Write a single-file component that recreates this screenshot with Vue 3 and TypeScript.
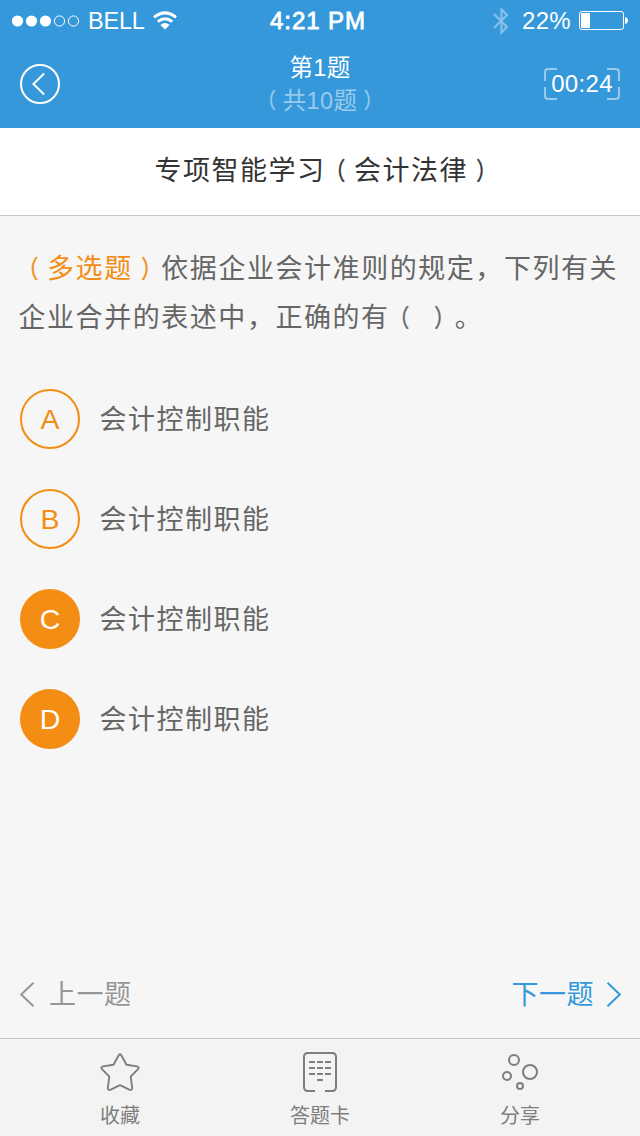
<script setup lang="ts">
interface Option {
  key: string
  text: string
  selected: boolean
}

const options: Option[] = [
  { key: 'A', text: '会计控制职能', selected: false },
  { key: 'B', text: '会计控制职能', selected: false },
  { key: 'C', text: '会计控制职能', selected: true },
  { key: 'D', text: '会计控制职能', selected: true },
]
</script>

<template>
  <div class="screen">
    <header class="top">
      <div class="status">
        <div class="carrier">
          <svg class="dots" width="70" height="14" viewBox="0 0 70 14">
            <g fill="#fff">
              <circle cx="6.5" cy="6" r="5.6" /><circle cx="20.5" cy="6" r="5.6" /><circle cx="34.5" cy="6" r="5.6" />
            </g>
            <g fill="none" stroke="#fff">
              <circle cx="48.5" cy="6" r="5.1" /><circle cx="62.5" cy="6" r="5.1" />
            </g>
          </svg>
          <span class="bell">BELL</span>
          <svg class="wifi" width="24" height="19" viewBox="0 0 24 19">
            <g fill="none" stroke="#fff" stroke-width="3">
              <path d="M1 6.3Q12 -2.6 23 6.3" />
              <path d="M4.8 10.6Q12 4.8 19.2 10.6" />
            </g>
            <path d="M7.4 14Q12 10.2 16.6 14L12 18.6Z" fill="#fff" />
          </svg>
        </div>
        <span class="clock">4:21 PM</span>
        <div class="power">
          <svg class="bt" width="16" height="28" viewBox="0 0 16 28">
            <path d="M1 7L14 20L8.5 25.5V2.5L14 8L1 21" fill="none" stroke="#85c1ea" stroke-width="2.2" />
          </svg>
          <span class="percent">22%</span>
          <svg class="battery" width="50" height="20" viewBox="0 0 50 20">
            <rect x=".5" y=".5" width="44" height="18" rx="2.5" fill="none" stroke="#fff" />
            <rect x="2" y="2" width="9" height="15" rx="1" fill="#fff" />
            <path d="M46 6Q49 7 49 9.5T46 13Z" fill="#fff" />
          </svg>
        </div>
      </div>
      <div class="nav">
        <svg class="back" width="40" height="40" viewBox="0 0 40 40" fill="none" stroke="#fff">
          <circle cx="20" cy="20" r="19" stroke-width="2" />
          <path d="M24.2 9.5L13.4 20L24.2 30.5" stroke-width="1.9" />
        </svg>
        <div class="heading">
          <div class="current">第1题</div>
          <div class="total"><span class="open">（</span>共10题<span class="close">）</span></div>
        </div>
        <div class="timer">
          <svg class="frame" width="76" height="32" viewBox="0 0 76 32" fill="none" stroke="#99cbed" stroke-width="2">
            <path d="M13 1H4Q1 1 1 4V13M63 1H72Q75 1 75 4V13M1 19V28Q1 31 4 31H13M75 19V28Q75 31 72 31H63" />
          </svg>
          <span class="time">00:24</span>
        </div>
      </div>
    </header>

    <h1 class="title">专项智能学习<span class="open">（</span>会计法律<span class="close">）</span></h1>

    <main class="content">
      <p class="question">
        <span class="kind"><span class="open">（</span>多选题<span class="close">）</span></span>依据企业会计准则的规定，下列有关<br>企业合并的表述中，正确的有<span class="open">（</span><span class="blank"></span><span class="close">）</span>。
      </p>
      <ul class="options">
        <li v-for="option in options" :key="option.key" class="option">
          <span class="badge" :class="{ selected: option.selected }">{{ option.key }}</span>
          <span class="label">{{ option.text }}</span>
        </li>
      </ul>
    </main>

    <nav class="pager">
      <div class="page prev">
        <svg width="15" height="26" viewBox="0 0 15 26"><path d="M13.5 1.7L1.2 13.5L13.5 25.3" fill="none" stroke="currentColor" stroke-width="1.9" /></svg>
        <span>上一题</span>
      </div>
      <div class="page next">
        <span>下一题</span>
        <svg width="15" height="26" viewBox="0 0 15 26"><path d="M1.5 1.7L13.8 13.5L1.5 25.3" fill="none" stroke="currentColor" stroke-width="1.9" /></svg>
      </div>
    </nav>

    <footer class="tabs">
      <div class="tab">
        <svg width="40" height="42" viewBox="0 0 40 42" fill="none" stroke="#7e7e7e" stroke-width="1.9" stroke-linejoin="round">
          <path d="M18.7 3.2Q20 1.2 21.3 3.2L26.5 12.8L37 14.4Q39.6 15.2 38 17.2L30.7 24.6L32.2 36Q32 38.4 29.8 37.8L20 33.2L10.2 37.8Q8 38.4 7.8 36L9.3 24.6L2 17.2Q.4 15.2 3 14.4L13.5 12.8Z" />
        </svg>
        <span>收藏</span>
      </div>
      <div class="tab">
        <svg width="40" height="42" viewBox="0 0 40 42" fill="none" stroke="#7e7e7e" stroke-width="2">
          <path d="M15 39H8Q4 39 4 35V5Q4 1 8 1H32Q36 1 36 5V35Q36 39 32 39H25" />
          <path d="M9 10H15M17 10H23M25 10H31M9 16H15M17 16H23M25 16H31M9 22H15M17 22H23M25 22H31M17 28H23" />
        </svg>
        <span>答题卡</span>
      </div>
      <div class="tab">
        <svg width="40" height="42" viewBox="0 0 40 42" fill="none" stroke="#7e7e7e" stroke-width="2">
          <circle cx="14" cy="8" r="5" /><circle cx="30" cy="20" r="7" /><circle cx="7" cy="24" r="4" /><circle cx="20" cy="34" r="3" />
        </svg>
        <span>分享</span>
      </div>
    </footer>
  </div>
</template>

<style>
body {
  margin: 0;
}
</style>

<style scoped>
.screen {
  display: flex;
  flex-direction: column;
  width: 640px;
  height: 1136px;
  overflow: hidden;
  background: #f6f6f6;
  color: #666;
  font-family: "Liberation Sans", "Noto Sans CJK SC", sans-serif;
  white-space: nowrap;
}
.top {
  height: 128px;
  background: #3498db;
  color: #fff;
}
.status {
  display: grid;
  grid-template-columns: 1fr auto 1fr;
  height: 40px;
  line-height: 42px;
  font-size: 24px;
}
.carrier,
.power {
  display: flex;
  align-items: center;
}
.dots {
  margin: 1px 7px 0 11px;
}
.bell {
  font-size: 23.5px;
  letter-spacing: -0.2px;
}
.wifi {
  margin: 0 0 2px 8.5px;
}
.clock {
  margin-right: 4px;
  letter-spacing: 0.95px;
  -webkit-text-stroke: 0.8px #fff;
}
.power {
  justify-content: flex-end;
  padding-right: 11px;
}
.bt {
  margin-right: 13.5px;
}
.percent {
  letter-spacing: 0.3px;
  margin-right: 8px;
}
.nav {
  display: grid;
  grid-template-columns: 1fr auto 1fr;
  height: 88px;
}
.back {
  margin: 24px 0 0 20px;
}
.heading {
  display: flex;
  flex-direction: column;
  align-items: center;
  padding-top: 12px;
  font-size: 23.5px;
}
.current {
  height: 33px;
  line-height: 33px;
  letter-spacing: 0.3px;
}
.total {
  height: 33px;
  line-height: 33px;
  color: #99cbed;
  letter-spacing: 0.4px;
}
.timer {
  display: grid;
  justify-self: end;
  align-self: start;
  width: 76px;
  height: 32px;
  margin: 28px 20px 0 0;
  place-items: center;
}
.frame,
.time {
  grid-area: 1 / 1;
}
.time {
  font-size: 24px;
  line-height: 32px;
  letter-spacing: 0.3px;
}
.open,
.close {
  display: inline-block;
  -webkit-text-stroke: 0.5px currentColor;
}
.open {
  transform: translateX(-0.17em) scale(0.75, 0.9);
}
.close {
  transform: translateX(0.17em) scale(0.75, 0.9);
}
.title {
  height: 87px;
  margin: 0;
  padding-left: 154.5px;
  border-bottom: 1px solid #c8c8c8;
  background: #fff;
  color: #333;
  font-size: 27px;
  font-weight: 400;
  line-height: 87px;
  letter-spacing: 1.5px;
}
.content {
  flex: 1;
  padding: 29px 0 0 18.5px;
}
.question {
  margin: 0;
  font-size: 27px;
  line-height: 49px;
  letter-spacing: 1.55px;
}
.kind {
  color: #f48d13;
}
.blank {
  display: inline-block;
  width: 8px;
}
.options {
  display: grid;
  gap: 40px;
  margin: 46px 0 0 1.5px;
  padding: 0;
  list-style: none;
}
.option {
  display: flex;
  align-items: center;
  gap: 19.5px;
  height: 60px;
}
.badge {
  box-sizing: border-box;
  width: 60px;
  height: 60px;
  border: 2px solid #f48d13;
  border-radius: 50%;
  color: #f48d13;
  font-size: 28.5px;
  line-height: 56px;
  text-align: center;
}
.badge.selected {
  background: #f48d13;
  color: #fff;
}
.label {
  padding-top: 2px;
  font-size: 27px;
  line-height: 56px;
  letter-spacing: 1.5px;
}
.pager {
  display: flex;
  justify-content: space-between;
  height: 88px;
  padding: 0 19.5px;
  font-size: 27px;
  letter-spacing: 0.5px;
}
.page {
  display: flex;
  align-items: center;
  gap: 14.5px;
}
.page span {
  padding-bottom: 4px;
}
.prev {
  color: #969696;
}
.next {
  gap: 11.5px;
  color: #3498db;
}
.tabs {
  display: grid;
  grid-template-columns: repeat(3, 200px);
  justify-content: center;
  height: 97px;
  border-top: 1px solid #c3c3c3;
  background: #f3f3f3;
  color: #7e7e7e;
  font-size: 20px;
}
.tab {
  display: flex;
  flex-direction: column;
  align-items: center;
  padding-top: 13px;
}
.tab span {
  line-height: 30px;
  margin-top: 7px;
}
</style>
